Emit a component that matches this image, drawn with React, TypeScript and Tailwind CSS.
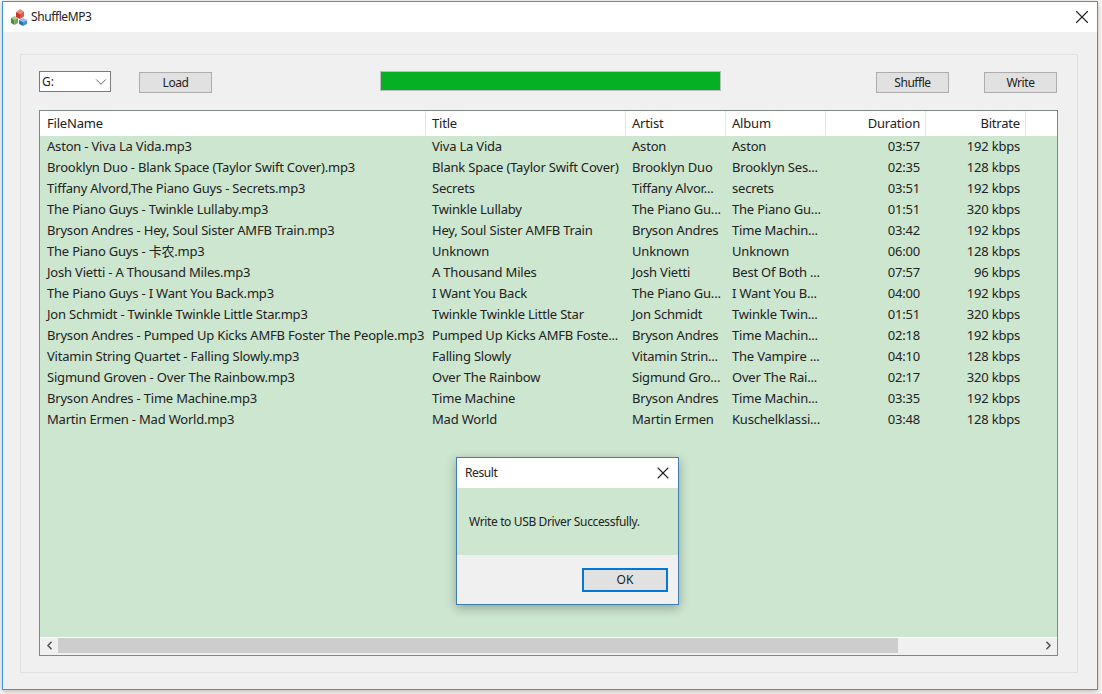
import { ChevronLeft, ChevronRight, ChevronDown, X } from 'lucide-react';

const rows = [
  ['Aston - Viva La Vida.mp3', 'Viva La Vida', 'Aston', 'Aston', '03:57', '192 kbps'],
  ['Brooklyn Duo - Blank Space (Taylor Swift Cover).mp3', 'Blank Space (Taylor Swift Cover)', 'Brooklyn Duo', 'Brooklyn Ses...', '02:35', '128 kbps'],
  ['Tiffany Alvord,The Piano Guys - Secrets.mp3', 'Secrets', 'Tiffany Alvor...', 'secrets', '03:51', '192 kbps'],
  ['The Piano Guys - Twinkle Lullaby.mp3', 'Twinkle Lullaby', 'The Piano Gu...', 'The Piano Gu...', '01:51', '320 kbps'],
  ['Bryson Andres - Hey, Soul Sister AMFB Train.mp3', 'Hey, Soul Sister AMFB Train', 'Bryson Andres', 'Time Machin...', '03:42', '192 kbps'],
  ['The Piano Guys - 卡农.mp3', 'Unknown', 'Unknown', 'Unknown', '06:00', '128 kbps'],
  ['Josh Vietti - A Thousand Miles.mp3', 'A Thousand Miles', 'Josh Vietti', 'Best Of Both ...', '07:57', '96 kbps'],
  ['The Piano Guys - I Want You Back.mp3', 'I Want You Back', 'The Piano Gu...', 'I Want You B...', '04:00', '192 kbps'],
  ['Jon Schmidt - Twinkle Twinkle Little Star.mp3', 'Twinkle Twinkle Little Star', 'Jon Schmidt', 'Twinkle Twin...', '01:51', '320 kbps'],
  ['Bryson Andres - Pumped Up Kicks AMFB Foster The People.mp3', 'Pumped Up Kicks AMFB Foste...', 'Bryson Andres', 'Time Machin...', '02:18', '192 kbps'],
  ['Vitamin String Quartet - Falling Slowly.mp3', 'Falling Slowly', 'Vitamin Strin...', 'The Vampire ...', '04:10', '128 kbps'],
  ['Sigmund Groven - Over The Rainbow.mp3', 'Over The Rainbow', 'Sigmund Gro...', 'Over The Rai...', '02:17', '320 kbps'],
  ['Bryson Andres - Time Machine.mp3', 'Time Machine', 'Bryson Andres', 'Time Machin...', '03:35', '192 kbps'],
  ['Martin Ermen - Mad World.mp3', 'Mad World', 'Martin Ermen', 'Kuschelklassi...', '03:48', '128 kbps'],
];

const headers = ['FileName', 'Title', 'Artist', 'Album', 'Duration', 'Bitrate'];
const colClass = [
  'w-[386px] pl-[7px] text-left',
  'w-[200px] pl-[6px] text-left',
  'w-[100px] pl-[6px] text-left',
  'w-[100px] pl-[6px] text-left',
  'w-[100px] pr-[5px] text-right',
  'w-[100px] pr-[5px] text-right',
];

function GrayButton({ label }: { label: string }) {
  return (
    <button className="w-[73px] h-[21px] bg-[#e1e1e1] border border-[#adadad] text-[12px] tracking-[-0.45px] text-[#222] leading-[20px]">
      {label}
    </button>
  );
}

function AppIcon() {
  return (
    <svg width="16" height="17" viewBox="0 0 16 17">
      <path d="M5 3l4-3 4 2.500-4 2.500z" fill="#ec8a78" />
      <path d="M5 3l4 2v5L5 8z" fill="#c9352b" />
      <path d="M9 5l4-2.500V7.500L9 10z" fill="#e2554a" />
      <path d="M0 9l3.500-2L7 9l-3.500 2z" fill="#a6c98e" />
      <path d="M0 9l3.500 2v5L0 14z" fill="#4d8a3a" />
      <path d="M3.500 11L7 9v5l-3.500 2z" fill="#72a858" />
      <path d="M8 11l4-2 4 2-4 2z" fill="#8fc0e8" />
      <path d="M8 11l4 2v4l-4-2z" fill="#2f74b5" />
      <path d="M12 13l4-2v4l-4 2z" fill="#4a94d4" />
    </svg>
  );
}

export default function App() {
  return (
    <div className="w-[1102px] h-[694px] bg-[#fafafa] pt-[1px] pl-[2px] font-['Noto_Sans','Noto_Sans_CJK_SC',sans-serif] text-[#222]">
      <div className="relative w-[1096px] h-[689px] border border-[#3c93d6] bg-[#f0f0f0] flex flex-col shadow-[0_2px_6px_rgba(90,70,50,0.35)]">
        <div className="h-[30px] bg-white flex items-center pl-[8px] pr-[4px] shrink-0">
          <AppIcon />
          <span className="ml-[4px] text-[12px] tracking-[-0.4px]">ShuffleMP3</span>
          <X className="ml-auto" size={22} strokeWidth={1.2} />
        </div>

        <div className="ml-[17px] mr-[19px] mt-[22px] h-[619px] border border-[#e0e0e0] flex flex-col pl-[18px] pr-[19px]">
          <div className="h-[55px] flex items-start pt-[16px] shrink-0">
            <div className="w-[72px] h-[21px] bg-white border border-[#7a7a7a] flex items-center pl-[2px] text-[12px]">
              G:
              <ChevronDown className="ml-auto text-[#555]" size={18} strokeWidth={1.2} />
            </div>
            <div className="ml-[28px] mt-[1px] flex">
              <GrayButton label="Load" />
            </div>
            <div className="ml-[168px] w-[341px] h-[20px] border border-[#bcbcbc] bg-[#06b025]" />
            <div className="ml-auto mt-[1px] flex gap-[35px] pr-[1px]">
              <GrayButton label="Shuffle" />
              <GrayButton label="Write" />
            </div>
          </div>

          <div className="w-[1019px] h-[546px] border border-[#7f8a86] bg-[#cde6d0] flex flex-col overflow-hidden">
            <div className="h-[25px] bg-white flex shrink-0 text-[13px] tracking-[-0.2px] leading-[25px]">
              {headers.map((h, i) => (
                <div key={h} className={`${colClass[i]} h-full border-r border-[#e5e5e5]`}>
                  {h}
                </div>
              ))}
            </div>
            <div className="flex-1 text-[13px] tracking-[-0.2px] leading-[21px]">
              {rows.map((row) => (
                <div key={row[0]} className="h-[21px] flex whitespace-nowrap">
                  {row.map((cell, i) => (
                    <div key={i} className={`${colClass[i]} border-r border-transparent`}>
                      {cell}
                    </div>
                  ))}
                </div>
              ))}
            </div>
            <div className="h-[18px] border-t border-white bg-[#f0f0f0] flex items-start shrink-0">
              <div className="w-[18px] h-[15px] flex items-center justify-center">
                <ChevronLeft size={13} strokeWidth={3} className="text-[#555]" />
              </div>
              <div className="w-[840px] h-[15px] bg-[#cdcdcd]" />
              <div className="ml-auto w-[17px] h-[15px] flex items-center justify-center">
                <ChevronRight size={13} strokeWidth={3} className="text-[#555]" />
              </div>
            </div>
          </div>
        </div>

        <div className="absolute left-[453px] top-[455px] w-[223px] h-[148px] border border-[#3c7fb1] bg-[#f0f0f0] flex flex-col shadow-[0_3px_10px_rgba(0,0,0,0.3)]">
          <div className="h-[30px] bg-white flex items-center pl-[8px] pr-[5px] text-[12px] tracking-[-0.4px] shrink-0">
            Result
            <X className="ml-auto" size={20} strokeWidth={1.3} />
          </div>
          <div className="h-[67px] bg-[#cde6d0] flex items-center pl-[12px] text-[12px] tracking-[-0.36px] shrink-0">
            Write to USB Driver Successfully.
          </div>
          <div className="flex-1 flex justify-end items-start pt-[13px] pr-[10px]">
            <button className="w-[86px] h-[24px] bg-[#e1e1e1] border-2 border-[#0078d7] text-[12px] leading-[20px]">
              OK
            </button>
          </div>
        </div>
      </div>
    </div>
  );
}
